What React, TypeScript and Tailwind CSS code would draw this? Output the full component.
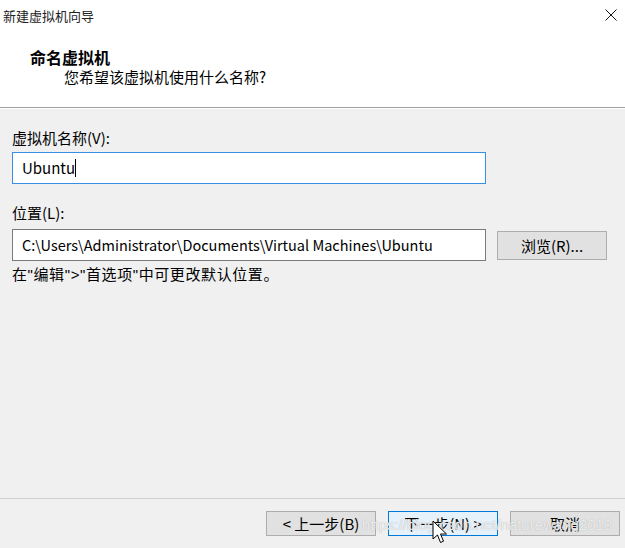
const cjk = { fontFamily: '"Noto Sans CJK SC", "Noto Sans", sans-serif' };

function CloseIcon() {
  return (
    <svg width="12" height="12" viewBox="0 0 12 12" className="block">
      <path d="M0.5 0.5 L11.5 11.5 M11.5 0.5 L0.5 11.5" stroke="#111" strokeWidth="1" fill="none" />
    </svg>
  );
}

function Pointer() {
  return (
    <svg width="18" height="26" viewBox="0 0 18 26" className="block">
      <path
        d="M1 1 L1 19 L5.5 15 L8.5 22.5 L11.5 21.2 L8.5 14 L14.5 14 Z"
        fill="#fff"
        stroke="#000"
        strokeWidth="1"
        strokeLinejoin="round"
      />
    </svg>
  );
}

export default function App() {
  return (
    <div className="relative w-[625px] h-[548px] bg-[#f0f0f0] flex flex-col overflow-hidden text-[#000]" style={cjk}>
      {/* header */}
      <div className="bg-white h-[108px] border-b border-[#a0a0a0] shadow-[0_1px_0_#ffffff]">
        <div className="h-[30px] flex items-center justify-between pl-[3px] pr-[8px]">
          <span className="text-[13px] leading-none text-[#222]">新建虚拟机向导</span>
          <CloseIcon />
        </div>
        <div className="pl-[30px] mt-[17px] text-[16px] leading-[20px] font-bold">命名虚拟机</div>
        <div className="pl-[64px] text-[15px] leading-[20px]">您希望该虚拟机使用什么名称?</div>
      </div>

      {/* body */}
      <div className="flex-1 px-[12px] pt-[20px]">
        <div className="text-[15px] leading-[20px]">虚拟机名称(V):</div>
        <div className="mt-[4px] w-[474px] h-[32px] bg-white border border-[#3a8ee6] flex items-center pl-[9px] text-[15px]">
          <span>Ubuntu</span>
          <span className="w-px h-[18px] bg-black" />
        </div>

        <div className="mt-[19px] text-[15px] leading-[20px]">位置(L):</div>
        <div className="mt-[6px] flex items-center gap-[11px]">
          <div className="w-[474px] h-[32px] bg-white border border-[#7a7a7a] flex items-center pl-[9px] text-[14.5px] whitespace-nowrap">
            C:\Users\Administrator\Documents\Virtual Machines\Ubuntu
          </div>
          <button className="w-[110px] h-[29px] bg-[#e1e1e1] border border-[#adadad] text-[15px] leading-none">
            浏览(R)...
          </button>
        </div>
        <div
          className="mt-[4px] text-[15px] leading-[20px] tracking-[0.6px]"
          style={{ fontFamily: '"Liberation Sans", "Noto Sans CJK SC", sans-serif' }}
        >
          在"编辑"&gt;"首选项"中可更改默认位置。
        </div>
      </div>

      {/* footer */}
      <div className="h-[50px] border-t border-[#d0d0d0] flex justify-end gap-[12px] pt-[12px] pr-[5px]">
        <button className="w-[110px] h-[25px] bg-[#e1e1e1] border border-[#adadad] text-[15px] leading-none">
          &lt; 上一步(B)
        </button>
        <button className="w-[110px] h-[25px] bg-[#e5f1fb] border border-[#0078d7] text-[15px] leading-none">
          下一步(N) &gt;
        </button>
        <button className="w-[110px] h-[25px] bg-[#e1e1e1] border border-[#adadad] text-[15px] leading-none">
          取消
        </button>
      </div>

      {/* watermark + mouse pointer */}
      <div
        className="absolute left-[362px] top-[514px] text-[15px] leading-[22px] text-white/80 whitespace-nowrap pointer-events-none [text-shadow:0_0_1px_#9a9a9a]"
        style={{ fontFamily: '"Liberation Sans", Arial, sans-serif' }}
      >
        https://blog.csdn.net/naturewang2010
      </div>
      <div className="absolute left-[432px] top-[520px]">
        <Pointer />
      </div>
    </div>
  );
}
